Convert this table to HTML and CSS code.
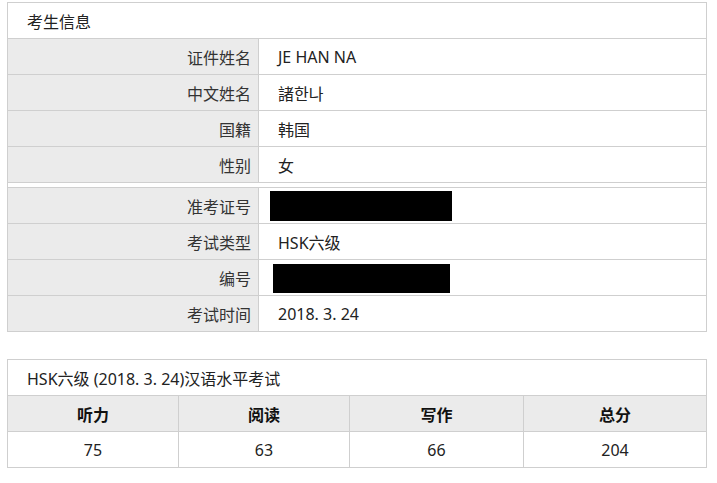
FILE: index.html
```html
<!DOCTYPE html>
<html lang="zh">
<head>
<meta charset="utf-8">
<title>考生信息</title>
<link rel="stylesheet" href="styles.css">
</head>
<body>
<div class="page">
  <section class="panel">
    <div class="panel-title">考生信息</div>
    <div class="group">
      <div class="row"><div class="label">证件姓名</div><div class="value">JE HAN NA</div></div>
      <div class="row"><div class="label">中文姓名</div><div class="value">諸한나</div></div>
      <div class="row"><div class="label">国籍</div><div class="value">韩国</div></div>
      <div class="row"><div class="label">性别</div><div class="value">女</div></div>
    </div>
    <div class="spacer"></div>
    <div class="group group-top">
      <div class="row"><div class="label">准考证号</div><div class="value"><span class="redact redact-a"></span></div></div>
      <div class="row"><div class="label">考试类型</div><div class="value">HSK六级</div></div>
      <div class="row"><div class="label">编号</div><div class="value"><span class="redact redact-b"></span></div></div>
      <div class="row"><div class="label">考试时间</div><div class="value">2018. 3. 24</div></div>
    </div>
  </section>

  <section class="panel score">
    <div class="panel-title">HSK六级 (2018. 3. 24)汉语水平考试</div>
    <div class="score-row head">
      <div class="c">听力</div><div class="c">阅读</div><div class="c">写作</div><div class="c">总分</div>
    </div>
    <div class="score-row">
      <div class="c">75</div><div class="c">63</div><div class="c">66</div><div class="c">204</div>
    </div>
  </section>
</div>
</body>
</html>
```
FILE: styles.css
```css
* { box-sizing: border-box; }
html, body { margin: 0; padding: 0; background: #fff; }
body {
  font-family: "Noto Sans", "Noto Sans CJK SC", sans-serif;
  font-size: 16px;
  color: #222;
}
.page {
  padding: 2px 0 0 7px;
  width: 707px;
  display: flex;
  flex-direction: column;
  gap: 27px;
}
.panel {
  border: 1px solid #cfcfcf;
  border-bottom: none;
  width: 700px;
}
.panel-title {
  height: 36px;
  border-bottom: 1px solid #cfcfcf;
  padding-left: 19px;
  display: flex;
  align-items: center;
  color: #222;
}
.spacer { height: 4px; }
.group-top { border-top: 1px solid #cfcfcf; }
.row {
  display: flex;
  height: 36px;
  border-bottom: 1px solid #cfcfcf;
}
.label {
  width: 251px;
  flex: none;
  background: #ebebeb;
  border-right: 1px solid #cfcfcf;
  padding-right: 7px;
  display: flex;
  align-items: center;
  justify-content: flex-end;
  color: #333;
}
.value {
  flex: 1;
  display: flex;
  align-items: center;
  padding-left: 19px;
}
.redact {
  display: block;
  background: #000;
}
.redact-a { width: 182px; height: 30px; margin-left: -8px; margin-top: 1px; }
.redact-b { width: 177px; height: 29px; margin-left: -5px; margin-top: 1px; }

.score-row {
  display: grid;
  grid-template-columns: 171px 171px 174px 1fr;
  height: 36px;
  border-bottom: 1px solid #cfcfcf;
}
.score-row .c {
  display: flex;
  align-items: center;
  justify-content: center;
  border-right: 1px solid #cfcfcf;
}
.score-row .c:last-child { border-right: none; }
.score-row.head { background: #ebebeb; font-weight: bold; color: #111; }
```
